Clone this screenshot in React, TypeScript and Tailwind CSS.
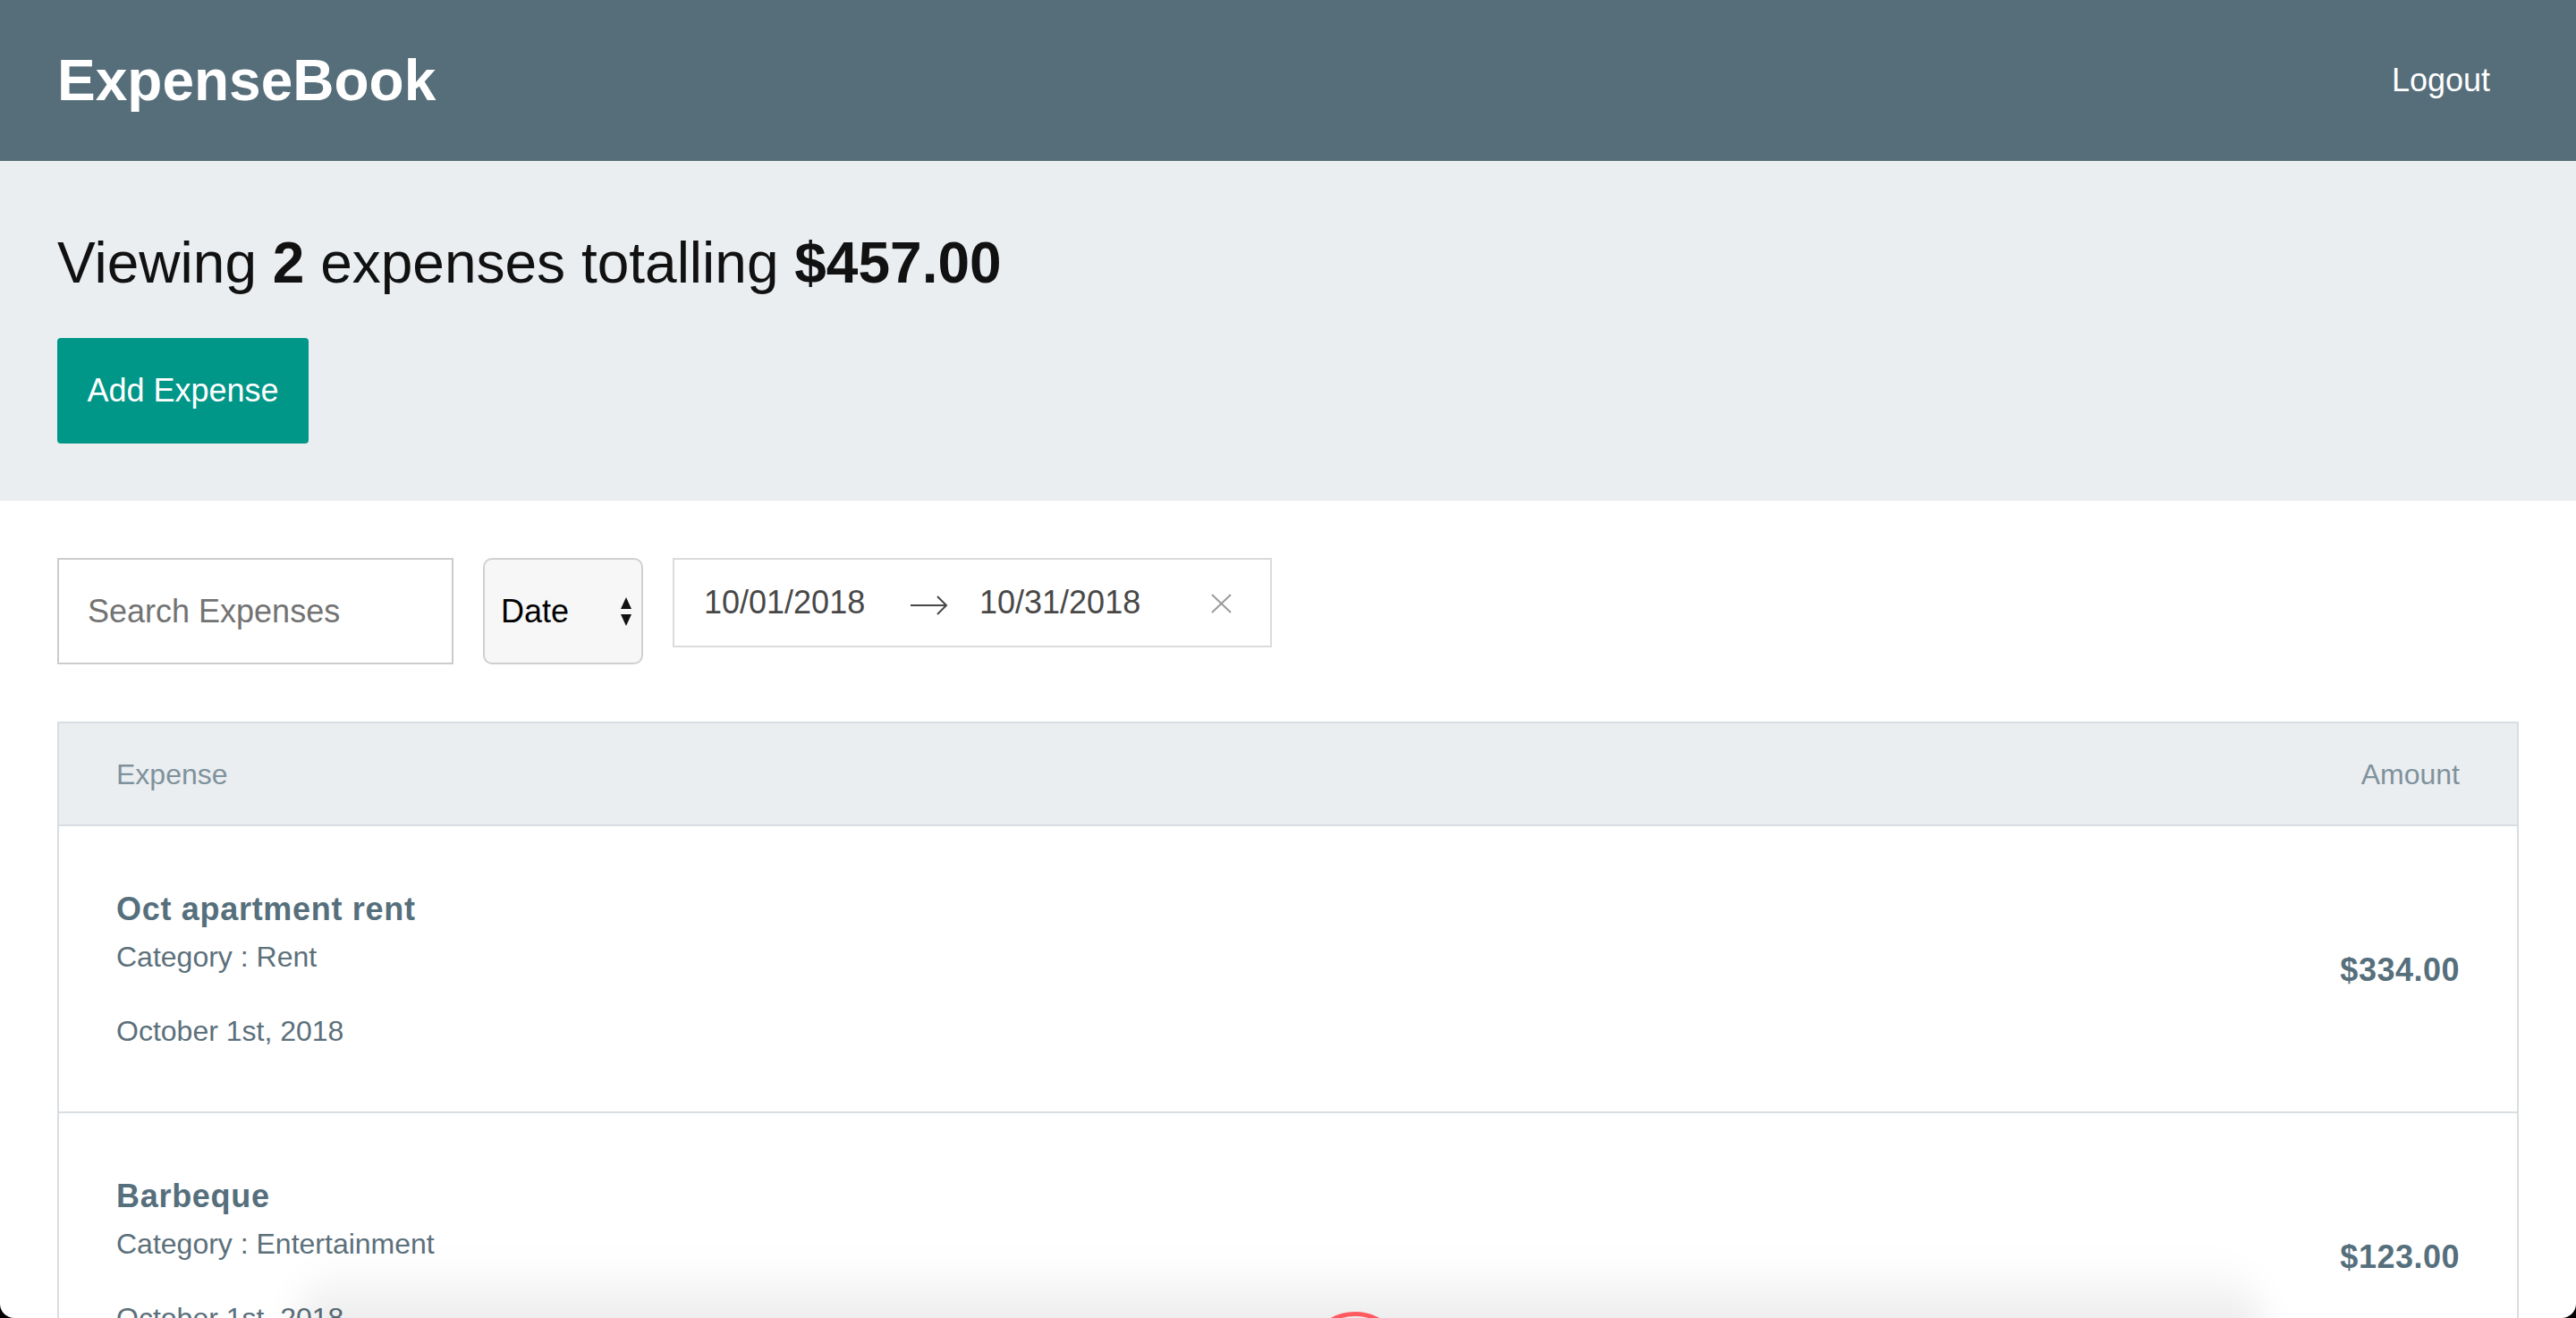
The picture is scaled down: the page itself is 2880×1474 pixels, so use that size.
const expenses = [
  { id: "1", description: "Oct apartment rent", category: "Rent", date: "October 1st, 2018", amount: "$334.00" },
  { id: "2", description: "Barbeque", category: "Entertainment", date: "October 1st, 2018", amount: "$123.00" },
];

function SelectArrows() {
  return (
    <svg width="12" height="32" viewBox="0 0 12 32">
      <path d="M6 0 L12 13 L0 13 Z" fill="#111" />
      <path d="M0 19 L12 19 L6 32 Z" fill="#111" />
    </svg>
  );
}

function RangeArrow() {
  return (
    <svg width="42" height="22" viewBox="0 0 42 22" fill="none" stroke="#484848" strokeWidth="2">
      <path d="M0 11 H40" />
      <path d="M30 1 L40 11 L30 21" />
    </svg>
  );
}

function ClearIcon() {
  return (
    <svg width="25" height="22" viewBox="0 0 25 22" fill="none" stroke="#9a9a9a" strokeWidth="2">
      <path d="M2 1 L23 21" />
      <path d="M23 1 L2 21" />
    </svg>
  );
}

function ExpenseRow({ description, category, date, amount }: (typeof expenses)[number]) {
  return (
    <div className="flex items-center justify-between border-b-2 border-[#d7dde1] px-16 pt-[67px] pb-[64px]">
      <div>
        <h3 className="text-[36px] font-bold leading-[52px] tracking-[0.7px] text-[#566f7c]">{description}</h3>
        <p className="mt-[1px] text-[32px] leading-[52px] text-[#5c707b]">Category : {category}</p>
        <p className="mt-[31px] text-[32px] leading-[52px] text-[#5c707b]">{date}</p>
      </div>
      <h3 className="text-[36px] font-bold leading-[52px] tracking-[0.5px] text-[#566f7c]">{amount}</h3>
    </div>
  );
}

export default function App() {
  return (
    <div className="relative h-[1474px] overflow-hidden bg-white font-['Liberation_Sans',Arial,sans-serif]">
      <header className="flex h-[180px] items-center justify-between bg-[#566e7a] px-16">
        <h1 className="text-[64px] font-bold leading-none text-white">ExpenseBook</h1>
        <button className="pr-[32px] text-[36px] leading-none text-white">Logout</button>
      </header>

      <section className="bg-[#ebeef1] px-16 py-16">
        <h2 className="text-[64px] leading-[100px] text-[#111]">
          Viewing <span className="font-bold">2</span> expenses totalling{" "}
          <span className="font-bold">$457.00</span>
        </h2>
        <button className="mt-[34px] h-[118px] w-[281px] rounded-[4px] bg-[#009688] text-[36px] text-white">
          Add Expense
        </button>
      </section>

      <div className="px-16">
        <div className="mt-16 flex items-start gap-[33px]">
          <input
            type="text"
            placeholder="Search Expenses"
            className="h-[119px] w-[443px] border-2 border-[#cacccd] px-[32px] text-[36px] text-[#333] outline-none placeholder:text-[#737373]"
          />
          <div className="flex h-[119px] w-[179px] items-center justify-between rounded-[10px] border-2 border-[#d0d0d0] bg-[#f7f7f7] pl-[18px] pr-[11px]">
            <span className="text-[36px] text-black">Date</span>
            <SelectArrows />
          </div>
          <div className="flex h-[100px] w-[670px] items-center border-2 border-[#dbdbdb] pl-[33px] text-[36px] text-[#484848]">
            <span className="w-[180px]">10/01/2018</span>
            <span className="ml-[51px] mt-[6px] flex">
              <RangeArrow />
            </span>
            <span className="ml-[35px] w-[180px]">10/31/2018</span>
            <span className="ml-[78px] mt-[2px] flex">
              <ClearIcon />
            </span>
          </div>
        </div>

        <div className="mt-16 border-x-2 border-t-2 border-[#d7dde1]">
          <div className="flex h-[115px] items-center justify-between border-b-2 border-[#d7dde1] bg-[#ebeef1] px-16 text-[32px] text-[#7f929c]">
            <span>Expense</span>
            <span>Amount</span>
          </div>
          {expenses.map((expense) => (
            <ExpenseRow key={expense.id} {...expense} />
          ))}
        </div>
      </div>

      {/* recorder toolbar peeking in at the bottom, its shadow sits over the page */}
      <div className="absolute left-[330px] top-[1400px] h-[180px] w-[2200px] rounded-[90px] bg-gradient-to-b from-[rgba(0,0,0,0)] from-5% to-[rgba(0,0,0,0.08)] to-45% blur-[18px]" />
      <div className="absolute left-[1459px] top-[1467px] h-[112px] w-[112px] rounded-full border-[5px] border-[#ff5a5f]" />

      <div className="absolute left-0 top-[1458px] h-4 w-4 overflow-hidden">
        <div className="absolute left-0 top-[-16px] h-8 w-8 rounded-full shadow-[0_0_0_16px_#000]" />
      </div>
      <div className="absolute right-0 top-[1458px] h-4 w-4 overflow-hidden">
        <div className="absolute right-0 top-[-16px] h-8 w-8 rounded-full shadow-[0_0_0_16px_#000]" />
      </div>
    </div>
  );
}
